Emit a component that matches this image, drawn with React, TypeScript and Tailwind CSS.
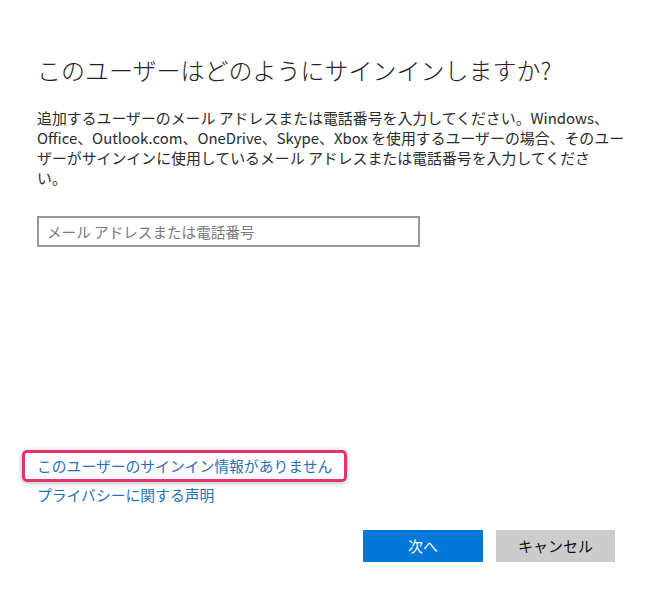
import React from 'react';

const font = { fontFamily: '"Noto Sans CJK JP", "Noto Sans", sans-serif' };

export default function App() {
  return (
    <div
      className="relative w-[652px] h-[600px] bg-white text-[#1a1a1a] px-[37px] pt-[54px]"
      style={font}
    >
      <h1 className="text-[24px] leading-[32px] font-light text-[#222] whitespace-nowrap">
        このユーザーはどのようにサインインしますか?
      </h1>

      <p className="mt-[22px] text-[14.9px] leading-[20px] text-[#2b2b2b]">
        <span className="block whitespace-nowrap">
          追加するユーザーのメール アドレスまたは電話番号を入力してください。Windows、
        </span>
        <span className="block whitespace-nowrap">
          Office、Outlook.com、OneDrive、Skype、Xbox を使用するユーザーの場合、そのユー
        </span>
        <span className="block whitespace-nowrap">
          ザーがサインインに使用しているメール アドレスまたは電話番号を入力してくださ
        </span>
        <span className="block whitespace-nowrap">い。</span>
      </p>

      <input
        type="text"
        placeholder="メール アドレスまたは電話番号"
        className="mt-[28px] block w-[383px] h-[31px] border-2 border-[#999999] px-[8px] text-[14.6px] text-[#222] placeholder:text-[#7a7a7a] outline-none"
        style={font}
      />

      <div className="mt-[205px] flex flex-col text-[14.8px] text-[#2870b5]">
        <div className="relative h-[29px] flex items-center">
          <a href="#" className="whitespace-nowrap">
            このユーザーのサインイン情報がありません
          </a>
          <span className="absolute left-[-15px] top-[-2px] w-[325px] h-[32px] rounded-[5px] border-[3px] border-[#e3336c] shadow-[0_1px_5px_rgba(0,0,0,0.3)] pointer-events-none" />
        </div>
        <div className="h-[29px] flex items-center">
          <a href="#" className="whitespace-nowrap">
            プライバシーに関する声明
          </a>
        </div>
      </div>

      <div className="mt-[20px] flex justify-end gap-[13px]">
        <button className="w-[120px] h-[32px] bg-[#0078d7] text-white text-[15px]" style={font}>
          次へ
        </button>
        <button className="w-[119px] h-[32px] bg-[#cccccc] text-[#111] text-[15px]" style={font}>
          キャンセル
        </button>
      </div>
    </div>
  );
}
